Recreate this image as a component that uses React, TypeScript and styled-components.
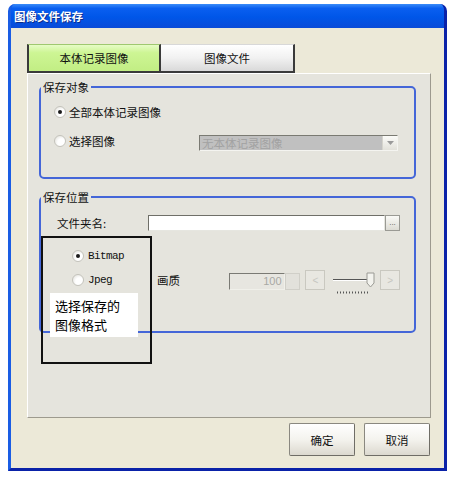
import styled, { createGlobalStyle } from "styled-components";

const GlobalStyle = createGlobalStyle`
  body {
    margin: 0;
    background: #ffffff;
    font-family: "Noto Sans CJK SC", "Liberation Sans", sans-serif;
    font-size: 12px;
    color: #111;
  }
`;

const App = () => {
  return (
    <>
      <GlobalStyle />
      <Window>
        <TitleBar>图像文件保存</TitleBar>
        <Body>
          <Tabs>
            <Tab $active>本体记录图像</Tab>
            <Tab>图像文件</Tab>
          </Tabs>
          <Panel>
            <Group $height={99}>
              <Legend>保存对象</Legend>
              <TargetRows>
                <Row>
                  <Radio $checked />
                  <span>全部本体记录图像</span>
                </Row>
                <Row>
                  <Radio />
                  <span>选择图像</span>
                  <Select>
                    <SelectText>无本体记录图像</SelectText>
                    <DropBtn>
                      <svg width="7" height="4" viewBox="0 0 7 4">
                        <path d="M0 0 L7 0 L3.5 4 Z" fill="#9a9a9a" />
                      </svg>
                    </DropBtn>
                  </Select>
                </Row>
              </TargetRows>
            </Group>

            <Group $height={143} $gap={11}>
              <Legend>保存位置</Legend>
              <PlaceRows>
                <FolderRow>
                  <FieldLabel>文件夹名:</FieldLabel>
                  <TextInput />
                  <BrowseBtn>...</BrowseBtn>
                </FolderRow>
                <FormatRow>
                  <FormatOption>
                    <Radio $checked />
                    <Mono>Bitmap</Mono>
                  </FormatOption>
                </FormatRow>
                <FormatRow>
                  <FormatOption>
                    <Radio />
                    <Mono>Jpeg</Mono>
                  </FormatOption>
                  <QualityLabel>画质</QualityLabel>
                  <NumBox>100</NumBox>
                  <SpinSquare />
                  <ArrowBtn>&lt;</ArrowBtn>
                  <Slider>
                    <svg width="42" height="24" viewBox="0 0 42 24">
                      <line x1="0" y1="7.5" x2="36" y2="7.5" stroke="#555" strokeWidth="1" />
                      <line x1="0" y1="8.5" x2="36" y2="8.5" stroke="#fff" strokeWidth="1" />
                      <path d="M34 1 H41 V11 L37.5 15 L34 11 Z" fill="#f3f3ee" stroke="#9a9a94" strokeWidth="1" />
                      <line x1="4" y1="20.5" x2="37" y2="20.5" stroke="#555" strokeWidth="2" strokeDasharray="1 2" />
                    </svg>
                  </Slider>
                  <ArrowBtn>&gt;</ArrowBtn>
                </FormatRow>
              </PlaceRows>
            </Group>

            <Callout>
              <CalloutLabel>
                <div>选择保存的</div>
                <div>图像格式</div>
              </CalloutLabel>
            </Callout>
          </Panel>
          <Footer>
            <DlgButton>确定</DlgButton>
            <DlgButton>取消</DlgButton>
          </Footer>
        </Body>
      </Window>
    </>
  );
};

export default App;

const Window = styled.div`
  margin: 4px 0 0 8px;
  width: 439px;
  height: 467px;
  box-sizing: border-box;
  display: flex;
  flex-direction: column;
  border-radius: 7px 7px 0 0;
  overflow: hidden;
  border-left: 3px solid #1a5de4;
  border-right: 3px solid #0a22a8;
  border-bottom: 3px solid #0a22a8;
  background: #0a54e0;
`;

const TitleBar = styled.div`
  height: 24px;
  margin: 0 -3px;
  padding-left: 6px;
  display: flex;
  align-items: center;
  background: linear-gradient(
    #3a8cf8 0%,
    #0a5ff0 18%,
    #0056e8 55%,
    #0a4bd8 100%
  );
  color: #ffffff;
  font-weight: 700;
  font-size: 11.5px;
  text-shadow: 1px 1px 0 #0b2c8a;
`;

const Body = styled.div`
  flex: 1;
  background: #ece9d8;
  padding: 16px 13px 0 16px;
  display: flex;
  flex-direction: column;
`;

const Tabs = styled.div`
  display: flex;
  height: 29px;
`;

const Tab = styled.div<{ $active?: boolean }>`
  width: 134px;
  box-sizing: border-box;
  display: flex;
  align-items: center;
  justify-content: center;
  font-size: 11.5px;
  border: 1px solid #3a3a3a;
  border-left-width: ${(p) => (p.$active ? "2px" : "0")};
  border-right-width: 2px;
  border-bottom-width: 2px;
  border-top-color: ${(p) => (p.$active ? "#9fc870" : "#d8d8d8")};
  background: ${(p) =>
    p.$active
      ? "linear-gradient(#e6fcc6, #cdf594 30%, #c2ee84)"
      : "linear-gradient(#ffffff, #f1f1f1 50%, #d9d9d9)"};
`;

const Panel = styled.div`
  position: relative;
  height: 345px;
  box-sizing: border-box;
  background: #e5e4dd;
  border: 1px solid;
  border-color: #ffffff #9d9a8e #9d9a8e #ffffff;
  padding: 6px 14px 0 11px;
`;

const Group = styled.fieldset<{ $height: number; $gap?: number }>`
  margin: ${(p) => p.$gap ?? 0}px 0 0 0;
  padding: 0;
  height: ${(p) => p.$height}px;
  box-sizing: border-box;
  border: 2px solid #4466d8;
  border-radius: 5px;
  min-width: 0;
`;

const Legend = styled.legend`
  padding: 0 2px;
  margin-left: 0;
  font-size: 11.5px;
  line-height: 14px;
`;

const TargetRows = styled.div`
  padding: 8px 16px 0 13px;
  display: flex;
  flex-direction: column;
  gap: 9px;
`;

const Row = styled.div`
  display: flex;
  align-items: center;
  gap: 3px;
  height: 20px;
  font-size: 11.5px;
`;

const Radio = styled.span<{ $checked?: boolean }>`
  width: 12px;
  height: 12px;
  box-sizing: border-box;
  border-radius: 50%;
  border: 1px solid #c4c3bc;
  background: radial-gradient(circle at 65% 65%, #ffffff 40%, #dcdbd4 100%);
  display: inline-flex;
  align-items: center;
  justify-content: center;
  flex-shrink: 0;
  &::after {
    content: "";
    width: 4px;
    height: 4px;
    border-radius: 50%;
    background: ${(p) => (p.$checked ? "#1a1a1a" : "transparent")};
  }
`;

const Select = styled.div`
  margin-left: auto;
  margin-top: 3px;
  width: 199px;
  height: 16px;
  box-sizing: border-box;
  display: flex;
  align-items: center;
  background: #c0c0c0;
  border: 1px solid;
  border-color: #7a7a72 #f4f4f0 #f4f4f0 #7a7a72;
`;

const SelectText = styled.span`
  flex: 1;
  padding-left: 2px;
  color: #a2a2a2;
  font-size: 11.5px;
  line-height: 14px;
`;

const DropBtn = styled.span`
  width: 14px;
  height: 14px;
  display: flex;
  align-items: center;
  justify-content: center;
  background: linear-gradient(#fbfbf8, #e2e1da);
  border-left: 1px solid #d4d3cc;
`;

const PlaceRows = styled.div`
  padding: 11px 14px 0 16px;
  display: flex;
  flex-direction: column;
`;

const FolderRow = styled.div`
  display: flex;
  align-items: center;
  height: 16px;
  margin-bottom: 15px;
`;

const FieldLabel = styled.span`
  width: 91px;
  font-size: 11.5px;
`;

const TextInput = styled.div`
  width: 237px;
  height: 16px;
  box-sizing: border-box;
  background: #ffffff;
  border: 1px solid;
  border-color: #6f6f68 #e6e6e0 #e6e6e0 #6f6f68;
`;

const BrowseBtn = styled.div`
  width: 15px;
  height: 16px;
  box-sizing: border-box;
  display: flex;
  align-items: flex-end;
  justify-content: center;
  padding-bottom: 3px;
  font-family: "Liberation Sans", sans-serif;
  font-size: 8px;
  line-height: 8px;
  color: #555;
  background: linear-gradient(#fafaf7, #dcdbd4);
  border: 1px solid #9a9a94;
`;

const FormatRow = styled.div`
  display: flex;
  align-items: center;
  height: 20px;
  margin-bottom: 4px;
`;

const FormatOption = styled.div`
  width: 101px;
  box-sizing: border-box;
  padding-left: 15px;
  display: flex;
  align-items: center;
  gap: 4px;
`;

const Mono = styled.span`
  font-family: "Liberation Mono", "DejaVu Sans Mono", monospace;
  font-size: 11px;
  letter-spacing: -0.6px;
`;

const QualityLabel = styled.span`
  width: 73px;
  font-size: 11.5px;
`;

const NumBox = styled.div`
  width: 56px;
  height: 17px;
  margin-top: 3px;
  box-sizing: border-box;
  border: 1px solid;
  border-color: #7a7a74 #f0f0ea #f0f0ea #7a7a74;
  background: #e7e6e0;
  color: #a8a8a4;
  font-family: "Liberation Sans", sans-serif;
  font-size: 11px;
  line-height: 15px;
  text-align: right;
  padding-right: 2px;
`;

const SpinSquare = styled.div`
  width: 16px;
  height: 17px;
  margin-top: 3px;
  box-sizing: border-box;
  background: #e2e1db;
  border: 1px solid #d0cfc8;
`;

const ArrowBtn = styled.div`
  width: 20px;
  height: 20px;
  margin-left: 5px;
  box-sizing: border-box;
  display: flex;
  align-items: center;
  justify-content: center;
  font-family: "Liberation Sans", sans-serif;
  font-size: 10px;
  color: #c6c6c0;
  background: #e8e7e1;
  border: 1px solid #c9c8c0;
`;

const Slider = styled.div`
  width: 42px;
  height: 24px;
  margin: 8px 0 0 8px;
  display: flex;
`;

const Callout = styled.div`
  position: absolute;
  left: 13px;
  top: 162px;
  width: 111px;
  height: 128px;
  box-sizing: border-box;
  border: 2px solid #111;
  padding: 55px 0 0 7px;
`;

const CalloutLabel = styled.div`
  width: 88px;
  height: 44px;
  box-sizing: border-box;
  background: #ffffff;
  padding: 3px 0 0 5px;
  font-size: 13px;
  line-height: 19px;
  color: #000;
`;

const Footer = styled.div`
  display: flex;
  justify-content: flex-end;
  gap: 9px;
  margin-top: 5px;
  padding-right: 1px;
`;

const DlgButton = styled.div`
  width: 66px;
  height: 33px;
  box-sizing: border-box;
  display: flex;
  align-items: center;
  justify-content: center;
  font-size: 11.5px;
  border: 1px solid #8a8880;
  border-right-color: #6f6d66;
  border-bottom-color: #6f6d66;
  border-radius: 2px;
  background: linear-gradient(#ffffff, #f4f3ee 50%, #dcd9cf);
`;
